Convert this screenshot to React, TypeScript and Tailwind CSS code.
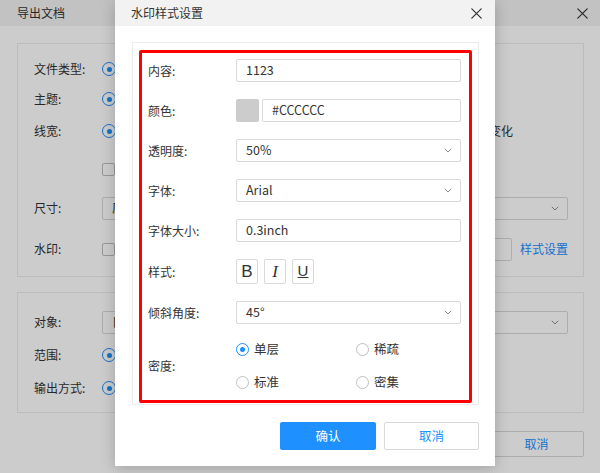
import React from "react";

const XIcon = ({ className = "" }: { className?: string }) => (
  <svg className={className} width="11" height="11" viewBox="0 0 11 11" fill="none">
    <path d="M0.8 0.8 L10.2 10.2 M10.2 0.8 L0.8 10.2" stroke="#333" strokeWidth="1.2" strokeLinecap="round" />
  </svg>
);

const Chevron = () => (
  <svg width="8" height="5" viewBox="0 0 8 5" fill="none">
    <path d="M0.8 0.8 L4 4 L7.2 0.8" stroke="#8c8c8c" strokeWidth="1" />
  </svg>
);

const Radio = ({ checked, big = false }: { checked?: boolean; big?: boolean }) => (
  <span
    className={`${big ? "w-[14px] h-[14px] border-[1.5px]" : "w-[13px] h-[13px] border"} shrink-0 rounded-full bg-white flex items-center justify-center ${
      checked ? "border-[#1890ff]" : "border-[#bfbfbf]"
    }`}
  >
    {checked && <span className="w-[5px] h-[5px] rounded-full bg-[#1890ff]" />}
  </span>
);

const Checkbox = () => <span className="w-[13px] h-[13px] shrink-0 border border-[#bfbfbf] bg-white rounded-[2px]" />;

const BgLabel = ({ children }: { children: React.ReactNode }) => (
  <span className="w-[68px] shrink-0 text-[12px] text-[#333]">{children}</span>
);

const Label = ({ children }: { children: React.ReactNode }) => (
  <span className="w-[88px] shrink-0 text-[12px] text-[#333]">{children}</span>
);

const Input = ({ value }: { value: string }) => (
  <div className="flex-1 h-[23px] border border-[#d9d9d9] rounded-[2px] flex items-center pl-[9px] text-[12.5px] text-[#333]">
    {value}
  </div>
);

const Select = ({ value }: { value: string }) => (
  <div className="flex-1 h-[23px] border border-[#d9d9d9] rounded-[2px] flex items-center justify-between pl-[9px] pr-[8px] text-[12.5px] text-[#333]">
    <span>{value}</span>
    <Chevron />
  </div>
);

export default function App() {
  return (
    <div className="relative w-[600px] h-[473px] overflow-hidden bg-white font-['Noto_Sans_CJK_SC','Noto_Sans',sans-serif]">
      {/* Background dialog */}
      <div className="flex flex-col">
        <div className="h-[26px] bg-[#f3f3f3] flex items-center justify-between pl-[17px] pr-[12px]">
          <span className="text-[12px] text-[#333]">导出文档</span>
          <XIcon />
        </div>

        <div className="mx-[16px] ml-[17px] mt-[17px] h-[234px] border border-[#ebebeb] pl-[16px] pt-[10px] flex flex-col">
          <div className="h-[30px] flex items-center">
            <BgLabel>文件类型:</BgLabel>
            <Radio checked big />
          </div>
          <div className="h-[30px] flex items-center">
            <BgLabel>主题:</BgLabel>
            <Radio checked big />
          </div>
          <div className="h-[30px] mt-[2px] flex items-center">
            <BgLabel>线宽:</BgLabel>
            <Radio checked big />
            <div className="flex-1" />
            <span className="text-[12px] text-[#333] mr-[70px]">线宽随缩放变化</span>
          </div>
          <div className="h-[30px] mt-[8px] flex items-center">
            <BgLabel>{""}</BgLabel>
            <Checkbox />
          </div>
          <div className="h-[30px] mt-[9px] flex items-center pr-[15px]">
            <BgLabel>尺寸:</BgLabel>
            <Select value="原始尺寸" />
          </div>
          <div className="h-[30px] mt-[11px] flex items-center">
            <BgLabel>水印:</BgLabel>
            <Checkbox />
            <div className="ml-[12px] w-[385px] h-[23px] border border-[#d9d9d9] rounded-[2px]" />
            <span className="ml-[8px] text-[12px] text-[#1890ff]">样式设置</span>
          </div>
        </div>

        <div className="mx-[16px] ml-[17px] mt-[15px] h-[121px] border border-[#ebebeb] pl-[16px] pt-[14px] flex flex-col">
          <div className="h-[30px] flex items-center pr-[15px]">
            <BgLabel>对象:</BgLabel>
            <Select value="日志" />
          </div>
          <div className="h-[30px] mt-[3px] flex items-center">
            <BgLabel>范围:</BgLabel>
            <Radio checked big />
          </div>
          <div className="h-[30px] mt-[3px] flex items-center">
            <BgLabel>输出方式:</BgLabel>
            <Radio checked big />
          </div>
        </div>

        <div className="mt-[18px] mr-[16px] flex justify-end gap-[8px]">
          <span className="w-[95px] h-[26px] bg-[#1890ff] rounded-[2px]" />
          <button className="w-[95px] h-[26px] border border-[#d9d9d9] bg-white text-[#1890ff] text-[12px] rounded-[2px]">取消</button>
        </div>
      </div>

      {/* Mask */}
      <div className="absolute inset-0 bg-black/20" />

      {/* Foreground dialog */}
      <div className="absolute left-[115px] top-0 w-[380px] h-[466px] bg-white shadow-[0_2px_14px_rgba(0,0,0,0.22)] flex flex-col">
        <div className="h-[26px] bg-[#f2f2f2] flex items-center justify-between pl-[16px] pr-[13px]">
          <span className="text-[12px] text-[#333]">水印样式设置</span>
          <XIcon />
        </div>

        <div className="relative mt-[16px] ml-[17px] w-[347px] h-[363px] border border-[#ebebeb] pt-[16px] pl-[15px] pr-[17px] flex flex-col">
          <div className="flex items-center">
            <Label>内容:</Label>
            <Input value="1123" />
          </div>
          <div className="flex items-center mt-[17px]">
            <Label>颜色:</Label>
            <span className="w-[23px] h-[23px] bg-[#cccccc] rounded-[2px] shrink-0" />
            <div className="ml-[3px] flex-1 flex">
              <Input value="#CCCCCC" />
            </div>
          </div>
          <div className="flex items-center mt-[17px]">
            <Label>透明度:</Label>
            <Select value="50%" />
          </div>
          <div className="flex items-center mt-[17px]">
            <Label>字体:</Label>
            <Select value="Arial" />
          </div>
          <div className="flex items-center mt-[17px]">
            <Label>字体大小:</Label>
            <Input value="0.3inch" />
          </div>
          <div className="flex items-center mt-[17px]">
            <Label>样式:</Label>
            <div className="flex gap-[6px]">
              <span className="w-[22px] h-[25px] border border-[#d9d9d9] rounded-[2px] flex items-center justify-center text-[17px] text-[#333] font-['Liberation_Sans',sans-serif]">
                B
              </span>
              <span className="w-[22px] h-[25px] border border-[#d9d9d9] rounded-[2px] flex items-center justify-center text-[17px] text-[#333] italic font-['Liberation_Serif',serif]">
                I
              </span>
              <span className="w-[22px] h-[25px] border border-[#d9d9d9] rounded-[2px] flex items-center justify-center text-[15px] text-[#333] underline font-['Liberation_Sans',sans-serif]">
                U
              </span>
            </div>
          </div>
          <div className="flex items-center mt-[17px]">
            <Label>倾斜角度:</Label>
            <Select value="45°" />
          </div>
          <div className="flex items-center mt-[17px]">
            <Label>密度:</Label>
            <div className="flex-1 flex flex-col gap-[17px] text-[12.5px] text-[#333]">
              <div className="flex items-center h-[16px]">
                <div className="w-[120px] flex items-center gap-[5px]">
                  <Radio checked />
                  <span>单层</span>
                </div>
                <div className="flex items-center gap-[5px]">
                  <Radio />
                  <span>稀疏</span>
                </div>
              </div>
              <div className="flex items-center h-[16px]">
                <div className="w-[120px] flex items-center gap-[5px]">
                  <Radio />
                  <span>标准</span>
                </div>
                <div className="flex items-center gap-[5px]">
                  <Radio />
                  <span>密集</span>
                </div>
              </div>
            </div>
          </div>

          {/* red annotation */}
          <div className="absolute left-[6px] top-[7px] w-[333px] h-[353px] border-[3px] border-[#ff0000] rounded-[2px] pointer-events-none" />
        </div>

        <div className="mt-[17px] mr-[16px] flex justify-end gap-[8px]">
          <button className="w-[96px] h-[28px] bg-[#1e90ff] text-white text-[12.5px] rounded-[2px]">确认</button>
          <button className="w-[95px] h-[28px] border border-[#d9d9d9] bg-white text-[#1890ff] text-[12.5px] rounded-[2px]">取消</button>
        </div>
      </div>
    </div>
  );
}
